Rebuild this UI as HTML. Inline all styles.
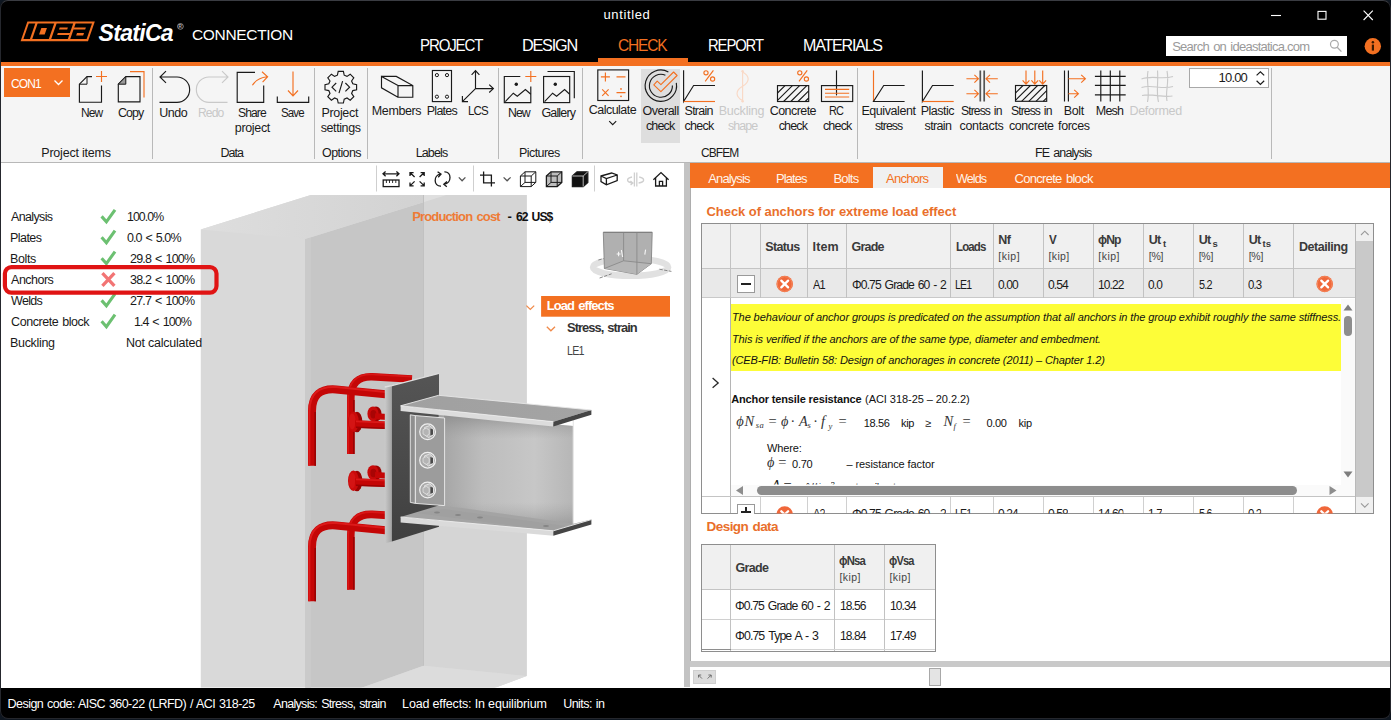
<!DOCTYPE html>
<html>
<head>
<meta charset="utf-8">
<title>untitled</title>
<style>
*{box-sizing:border-box;margin:0;padding:0}
html,body{width:1391px;height:720px;overflow:hidden;background:#000}
body{font-family:"Liberation Sans",sans-serif;font-size:12px;color:#1a1a1a;position:relative}
.abs{position:absolute}
.t{position:absolute;white-space:pre;line-height:1;color:#1a1a1a}
svg{position:absolute;overflow:visible}
#titlebar{left:0;top:0;width:1391px;height:62px;background:#000}
#oline{left:0;top:62px;width:1391px;height:4px;background:#f37021}
#ribbon{left:0;top:66px;width:1391px;height:96px;background:#f5f5f5}
#ribline{left:0;top:162px;width:1391px;height:1px;background:#b8b8b8}
#main{left:0;top:163px;width:1391px;height:525px;background:#fff}
#status{left:0;top:688px;width:1391px;height:32px;background:#000}
.sep{position:absolute;top:68px;width:1px;height:91px;background:#b9b9b9}
</style>
</head>
<body>
<div id="titlebar" class="abs"></div>
<div id="oline" class="abs"></div>
<div id="ribbon" class="abs"></div>
<div id="ribline" class="abs"></div>
<div id="main" class="abs"></div>
<div id="status" class="abs"></div>

<!--TITLE-->
<div class="abs" style="left:598px;top:58px;width:90px;height:4px;background:#f37021"></div>
<div class="abs" style="left:1166px;top:36px;width:181px;height:20px;background:#fff"></div>
<svg style="left:0;top:0" width="1391" height="62" viewBox="0 0 1391 62" fill="none">
<!-- IDEA logo -->
<g transform="translate(20.6 41.2) skewX(-19)">
<rect x="0" y="-19.8" width="67.4" height="19.8" fill="#f37021"/>
<rect x="2.1" y="-17.7" width="6.5" height="15.6" fill="#000"/>
<rect x="10.9" y="-17.7" width="16.6" height="15.6" fill="#000"/>
<rect x="29.9" y="-17.7" width="16.6" height="15.6" fill="#000"/>
<rect x="48.9" y="-17.7" width="16.4" height="15.6" fill="#000"/>
<rect x="16.2" y="-13.2" width="5.6" height="6.6" fill="#f37021"/>
<rect x="34.4" y="-13.6" width="8.2" height="2" fill="#f37021"/><rect x="34.4" y="-8.2" width="12.4" height="2" fill="#f37021"/>
<rect x="48.6" y="-13.6" width="12" height="2" fill="#f37021"/><rect x="53.6" y="-8.2" width="7" height="2.6" fill="#f37021"/>
</g>
<!-- registered mark -->
<circle cx="180.4" cy="26.4" r="2.9" stroke="#bbb" stroke-width="0.7"/>
<!-- window controls -->
<path d="M1271 15.5 H1281" stroke="#fff" stroke-width="1.1"/>
<rect x="1318" y="11.4" width="8" height="7.8" stroke="#fff" stroke-width="1.1"/>
<path d="M1363.6 10.7 L1372.8 20 M1372.8 10.7 L1363.6 20" stroke="#fff" stroke-width="1.1"/>
<!-- search magnifier -->
<circle cx="1334.4" cy="44.2" r="3.9" stroke="#a9a9a9" stroke-width="1.2"/><path d="M1337.2 47.2 L1341.4 51.6" stroke="#a9a9a9" stroke-width="1.3"/>
<!-- info -->
<circle cx="1372.8" cy="46.3" r="8.2" fill="#f37021"/>
<rect x="1371.8" y="44.6" width="2.2" height="6" fill="#3a1a00"/><circle cx="1372.9" cy="42.2" r="1.25" fill="#3a1a00"/>
</svg>
<!--TITLE-END-->

<!--RIBBON-->
<div class="abs" style="left:4px;top:68px;width:66px;height:29px;background:#f37021"></div>
<div class="abs" style="left:641px;top:69px;width:39px;height:74px;background:#dedede"></div>
<div class="sep" style="left:152px"></div><div class="sep" style="left:314px"></div><div class="sep" style="left:367px"></div>
<div class="sep" style="left:498px"></div><div class="sep" style="left:582px"></div><div class="sep" style="left:857px"></div><div class="sep" style="left:1271px"></div>
<div class="abs" style="left:1189px;top:68px;width:80px;height:20px;background:#fff;border:1px solid #a8a8a8"></div>
<svg style="left:0;top:0" width="1391" height="170" viewBox="0 0 1391 170" fill="none" stroke="#1a1a1a" stroke-width="1.15" stroke-linecap="butt" stroke-linejoin="miter">
<!-- CON1 chevron -->
<path d="M54.5 80.5 L58.5 84.5 L62.5 80.5" stroke="#fff" stroke-width="1.3"/>
<!-- New -->
<path d="M92 76.6 H87 L79.4 84.2 V102.2 H101.5 V85.5"/><path d="M79.4 84.2 H87 V76.6" stroke-width="1"/>
<path d="M101.5 71 V82 M96 76.5 H107" stroke="#f37021"/>
<!-- Copy -->
<path d="M125.8 76.6 H140 V101.8 H118.3 V84.2 Z"/><path d="M118.3 84.2 H125.8 V76.6 Z" fill="#9a9a9a" stroke-width="1"/>
<path d="M130 71.6 H144 V97.6" stroke="#f37021"/>
<!-- Undo -->
<path d="M166 71.2 L160 77 L166 82.8 M160 77 H177 A12.65 12.65 0 0 1 177 102.3 H159.5"/>
<!-- Redo -->
<path d="M222 71.2 L228 77 L222 82.8 M228 77 H209 A12.65 12.65 0 0 0 209 102.3 H227.5" stroke="#c9c9c9"/>
<!-- Share -->
<path d="M255 72.4 H237.2 V102.3 H263.7 V85.6"/>
<path d="M252.4 85.2 Q257 78 267 76.8 M262 71.8 L267.6 76.7 L262.6 82.2" stroke="#f37021"/>
<!-- Save -->
<path d="M277.3 96.4 V102.3 H308.7 V96.4"/>
<path d="M293 71.5 V96 M288 90.5 L293 96 L298 90.5" stroke="#f37021"/>
<!-- Project settings gear -->
<g transform="translate(340.8 87.2)">
<path id="gear" d="M-2.6 -15.8 H2.6 L3.4 -12 L6.2 -10.8 L9.4 -13 L13 -9.4 L10.8 -6.2 L12 -3.4 L15.8 -2.6 V2.6 L12 3.4 L10.8 6.2 L13 9.4 L9.4 13 L6.2 10.8 L3.4 12 L2.6 15.8 H-2.6 L-3.4 12 L-6.2 10.8 L-9.4 13 L-13 9.4 L-10.8 6.2 L-12 3.4 L-15.8 2.6 V-2.6 L-12 -3.4 L-10.8 -6.2 L-13 -9.4 L-9.4 -13 L-6.2 -10.8 L-3.4 -12 Z"/>
<path d="M-4.6 -4.2 L-8.8 0 L-4.6 4.2 M4.6 -4.2 L8.8 0 L4.6 4.2 M1.8 -6 L-1.8 6"/>
</g>
<!-- Members -->
<path d="M381.5 76.4 H396.3 L412.8 85.6 V97.2 H398 V85.6 H412.8 M398 85.6 L381.5 76.4 V87.8 L398 97.2"/>
<!-- Plates -->
<rect x="432.4" y="70.5" width="19.1" height="31.1"/>
<circle cx="436.9" cy="75.1" r="1.6" stroke-width="1"/><circle cx="447" cy="75.1" r="1.6" stroke-width="1"/><circle cx="436.9" cy="96.7" r="1.6" stroke-width="1"/><circle cx="447" cy="96.7" r="1.6" stroke-width="1"/>
<!-- LCS -->
<path d="M475.5 70.6 V88.6 H493.4 M475.5 88.6 L462.6 101.4 M471.6 74.8 L475.5 70.6 L479.4 74.8 M489.2 84.7 L493.4 88.6 L489.2 92.5 M462.4 96 V101.6 H468"/>
<!-- New picture -->
<path d="M520.3 76.5 H504.3 V102.6 H530.8 V86.5"/>
<path d="M505.3 101.6 L513.3 93.2 L517.3 96.2 L525.4 89.6 L530.8 94.2"/>
<circle cx="516.3" cy="84.2" r="1.7" fill="#1a1a1a" stroke="none"/>
<path d="M530.8 71 V82 M525.3 76.5 H536.3" stroke="#f37021"/>
<!-- Gallery -->
<rect x="543.6" y="76.5" width="26.1" height="26.1"/>
<path d="M544.6 101.6 L552.6 93.2 L556.6 96.2 L564.6 89.6 L569.7 94.2"/>
<circle cx="555.3" cy="84.2" r="1.7" fill="#1a1a1a" stroke="none"/>
<path d="M547.5 71.5 H574.3 V98.2"/>
<!-- Calculate -->
<rect x="597.8" y="69.9" width="30.8" height="30.6"/>
<path d="M605.4 72.4 V81.4 M600.9 76.9 H609.9 M616.5 76.9 H625.5 M602.2 89.4 L608.6 95.8 M608.6 89.4 L602.2 95.8 M616.5 92.6 H625.5" stroke="#f37021"/>
<circle cx="621" cy="88.9" r="0.9" fill="#f37021" stroke="none"/><circle cx="621" cy="96.3" r="0.9" fill="#f37021" stroke="none"/>
<path d="M609.2 121.2 L612.7 124.6 L616.2 121.2"/>
<!-- Overall check -->
<path d="M668.4 71.9 A15.7 15.7 0 1 0 676.3 82.8"/><path d="M665.4 75.2 A11.5 11.5 0 1 0 672.4 85.4"/>
<path d="M653.8 84.9 L660.9 91.6 L677.1 75.5 L673.6 72 L660.9 84.6 L657.2 81.2 Z" stroke="#f37021" stroke-width="1.1" stroke-linejoin="round"/>
<!-- Strain check -->
<path d="M683.6 70.3 V101.5 L693.6 85.5 H715"/><path d="M683.6 101.5 H715" stroke="#f37021"/>
<g stroke="#f37021"><circle cx="706" cy="72.8" r="2.1"/><circle cx="712.6" cy="79" r="2.1"/><path d="M713.4 70.4 L705.2 81.4"/></g>
<!-- Buckling (disabled) -->
<path d="M742.6 71 V101.4 M742.6 72 C750 76 750 82 742.6 86.2 C735.2 90.4 735.2 96.4 742.6 100.6" stroke="#f9d9c6"/>
<circle cx="742.6" cy="71.3" r="1.2" fill="#f9d9c6" stroke="none"/><circle cx="742.6" cy="101.2" r="1.2" fill="#f9d9c6" stroke="none"/>
<!-- Concrete check -->
<rect x="777.5" y="85.6" width="31.2" height="15.9"/>
<path d="M777.5 93 L785 85.6 M777.5 100.4 L792.4 85.6 M783.6 101.5 L799.6 85.6 M790.8 101.5 L806.8 85.6 M798 101.5 L808.7 90.8 M805.2 101.5 L808.7 98" stroke-width="1.1"/>
<g stroke="#f37021"><circle cx="799.8" cy="72.8" r="2.1"/><circle cx="806.4" cy="79" r="2.1"/><path d="M807.2 70.4 L799 81.4"/></g>
<!-- RC check -->
<rect x="821.5" y="85.6" width="31.2" height="15.9"/><path d="M836.5 70.4 V95.4"/>
<path d="M825 89.4 H849.2 M825 93.2 H849.2 M825 97 H849.2" stroke="#f37021"/>
<!-- Equivalent stress -->
<path d="M873.5 70.4 V101.5" stroke="#f37021"/><path d="M904.6 101.5 H873.5 L883.7 85.5 H904.6"/>
<!-- Plastic strain -->
<path d="M922.4 70.4 V101.5 L932.5 85.5 H953.7"/><path d="M922.4 101.5 H953.7" stroke="#f37021"/>
<!-- Stress in contacts -->
<path d="M980.3 70.4 V101.5 M984.2 70.4 V101.5" stroke="#555" stroke-width="1.7"/>
<path d="M966.4 78.7 H978.2 M974.4 74.8 L978.4 78.7 L974.4 82.6 M997.8 78.7 H986.2 M990 74.8 L986 78.7 L990 82.6 M966.4 93.7 H978.2 M974.4 89.8 L978.4 93.7 L974.4 97.6 M997.8 93.7 H986.2 M990 89.8 L986 93.7 L990 97.6" stroke="#f37021"/>
<!-- Stress in concrete -->
<rect x="1015.5" y="85.5" width="31.2" height="15.8"/>
<path d="M1015.5 93 L1023 85.5 M1015.5 100.3 L1030.4 85.5 M1021.6 101.3 L1037.6 85.5 M1028.8 101.3 L1044.8 85.5 M1036 101.3 L1046.7 90.7 M1043.2 101.3 L1046.7 97.8" stroke-width="1.1"/>
<path d="M1026 70.4 V84 M1022.6 80.4 L1026 84.2 L1029.4 80.4 M1034.8 70.4 V84 M1031.4 80.4 L1034.8 84.2 L1038.2 80.4 M1042.7 70.4 V84 M1039.3 80.4 L1042.7 84.2 L1046.1 80.4" stroke="#f37021"/>
<!-- Bolt forces -->
<path d="M1064.5 70.4 V101.5 M1068.4 70.4 V101.5"/>
<path d="M1068.4 78.7 H1085.2 M1081.2 74.8 L1085.4 78.7 L1081.2 82.6 M1068.4 93.7 H1078.2 M1074.2 89.8 L1078.4 93.7 L1074.2 97.6" stroke="#f37021"/>
<!-- Mesh -->
<path d="M1100.8 70.4 V101.5 M1110.3 70.4 V101.5 M1119.8 70.4 V101.5 M1094.9 76.3 H1125.7 M1094.9 85.4 H1125.7 M1094.9 94.8 H1125.7"/>
<!-- Deformed -->
<path d="M1148 71 C1146 82 1150 90 1147.5 102 M1157.5 70.5 C1158.5 82 1156 92 1158.5 102 M1167 71 C1169.5 82 1165 92 1167 101 M1141.5 79 C1152 75 1162 80 1173 76.5 M1141.5 87.5 C1152 84 1162 90 1173 86.5 M1142 95.5 C1152 93 1162 98 1172.5 96" stroke="#c9c9c9"/>
<!-- Spinner arrows -->
<path d="M1256.6 75.4 L1260.4 71.8 L1264.2 75.4 M1256.6 80.8 L1260.4 84.4 L1264.2 80.8" stroke-width="1.2"/>
</svg>
<!--RIBBON-END-->

<!--LEFT-->
<div class="abs" style="left:0;top:163px;width:1px;height:525px;background:#222"></div>
<svg style="left:0;top:0" width="1391" height="720" viewBox="0 0 1391 720" fill="none">
<defs>
<clipPath id="vp"><rect x="1" y="195" width="683" height="492.5"/></clipPath>
<linearGradient id="web" x1="0" y1="0" x2="1" y2="0"><stop offset="0" stop-color="#a6a6a6"/><stop offset="0.3" stop-color="#bdbdbd"/><stop offset="0.7" stop-color="#c7c7c7"/><stop offset="1" stop-color="#b6b6b6"/></linearGradient>
<linearGradient id="webv" x1="0" y1="0" x2="0" y2="1"><stop offset="0" stop-color="#858585" stop-opacity="0.75"/><stop offset="0.22" stop-color="#999" stop-opacity="0"/><stop offset="0.78" stop-color="#999" stop-opacity="0"/><stop offset="1" stop-color="#858585" stop-opacity="0.6"/></linearGradient>
<linearGradient id="tfl" x1="0" y1="0" x2="1" y2="0"><stop offset="0" stop-color="#a0a0a0"/><stop offset="1" stop-color="#a4a4a4"/></linearGradient>
<linearGradient id="redv" x1="0" y1="0" x2="1" y2="0"><stop offset="0" stop-color="#e51a1a"/><stop offset="0.45" stop-color="#d40808"/><stop offset="1" stop-color="#8e0000"/></linearGradient>
</defs>
<g clip-path="url(#vp)">
<!-- concrete block -->
<linearGradient id="topf" gradientUnits="userSpaceOnUse" x1="200" y1="0" x2="446" y2="0"><stop offset="0" stop-color="#dedede"/><stop offset="0.45" stop-color="#d8d8d8"/><stop offset="1" stop-color="#d1d1d1"/></linearGradient>
<polygon points="200.8,229.5 310.8,195 526.7,195 526.7,676 494.5,688 200.8,688" fill="#d9d9d9"/>
<polygon points="305.2,239.1 446.7,195 423.5,195 423.5,665.8 361,688 305.2,688" fill="#c6c6c6"/>
<polygon points="305.2,239.1 311,237.3 311,688 305.2,688" fill="#cacaca"/>
<polygon points="423.5,195 526.7,195 526.7,676 423.5,665.8" fill="#d5d5d5"/>
<polygon points="200.8,229.5 310.8,195 446.7,195 305.2,239.1" fill="url(#topf)"/>
<polygon points="423.5,195 446.7,195 423.5,202.2" fill="#dfdfdf"/>
<polygon points="423.5,665.8 526.7,676 494.5,688 361,688" fill="#dcdcdc"/>
<path d="M423.5 195 V665.8" stroke="#bebebe" stroke-width="0.9"/>
<!-- anchors: back (inner) hooks -->
<g fill="none" stroke-linecap="butt">
<path d="M412 379 L372 376.8 Q350.8 376.2 350.8 398 V454" stroke="#c40606" stroke-width="7.6"/>
<path d="M412 376.6 L372 374.4 Q348.4 374 348.2 398 V454" stroke="#d81616" stroke-width="1.8"/>
<path d="M353.8 400 V454" stroke="#9a0202" stroke-width="1.6"/>
<path d="M388 515.4 L372 514.4 Q350.8 513.8 350.8 535 V589.8" stroke="#c40606" stroke-width="7.6"/>
<path d="M388 513 L372 512 Q348.4 511.6 348.2 535 V589.8" stroke="#d81616" stroke-width="1.8"/>
<path d="M353.8 537 V589.8" stroke="#9a0202" stroke-width="1.6"/>
</g>
<!-- back studs -->
<ellipse cx="376" cy="414" rx="5.6" ry="7.4" fill="#9c0202"/><ellipse cx="373" cy="413.8" rx="5.6" ry="7.4" fill="#c80a0a"/><ellipse cx="373.4" cy="414.2" rx="3" ry="4.2" fill="#a80404"/>
<path d="M375 416.2 L388 417" stroke="#c40606" stroke-width="6"/>
<ellipse cx="376" cy="472.8" rx="5.6" ry="7.4" fill="#9c0202"/><ellipse cx="373" cy="472.6" rx="5.6" ry="7.4" fill="#c80a0a"/><ellipse cx="373.4" cy="473" rx="3" ry="4.2" fill="#a80404"/>
<path d="M375 475 L388 475.8" stroke="#c40606" stroke-width="6"/>
<!-- front (outer) hooks -->
<g fill="none">
<path d="M388 394.6 L336 389.4 Q312 387.6 312 411 V465.8" stroke="#c40606" stroke-width="8"/>
<path d="M388 392.2 L336 387 Q309.6 385.4 309.4 411 V465.8" stroke="#dc1a1a" stroke-width="2"/>
<path d="M315.2 412 V465.8" stroke="#9a0202" stroke-width="1.6"/>
<path d="M388 530.6 L336 525.4 Q312 523.6 312 547 V601.2" stroke="#c40606" stroke-width="8"/>
<path d="M388 528.2 L336 523 Q309.6 521.4 309.4 547 V601.2" stroke="#dc1a1a" stroke-width="2"/>
<path d="M315.2 548 V601.2" stroke="#9a0202" stroke-width="1.6"/>
</g>
<!-- front studs -->
<ellipse cx="357" cy="422" rx="5.4" ry="10.3" fill="#9c0202"/><ellipse cx="353.4" cy="421.8" rx="5.4" ry="10.3" fill="#ca0a0a"/><ellipse cx="352.2" cy="421.4" rx="3.4" ry="8" fill="#d41414"/>
<path d="M355 424 L388 425.2" stroke="#c40606" stroke-width="7.4"/><path d="M356 421.4 L388 422.6" stroke="#da1818" stroke-width="1.6"/><path d="M356 427.2 L388 428.4" stroke="#9a0202" stroke-width="1.4"/>
<ellipse cx="357" cy="481" rx="5.4" ry="10.3" fill="#9c0202"/><ellipse cx="353.4" cy="480.8" rx="5.4" ry="10.3" fill="#ca0a0a"/><ellipse cx="352.2" cy="480.4" rx="3.4" ry="8" fill="#d41414"/>
<path d="M355 482 L388 483.2" stroke="#c40606" stroke-width="7.4"/><path d="M356 479.4 L388 480.6" stroke="#da1818" stroke-width="1.6"/><path d="M356 485.2 L388 486.4" stroke="#9a0202" stroke-width="1.4"/>
<!-- base plate -->
<linearGradient id="bps" x1="0" y1="0" x2="1" y2="0"><stop offset="0" stop-color="#c9c9c9"/><stop offset="1" stop-color="#a3a3a3"/></linearGradient>
<linearGradient id="bpd" x1="0" y1="0" x2="0" y2="1"><stop offset="0" stop-color="#555"/><stop offset="1" stop-color="#404040"/></linearGradient>
<polygon points="384.8,387 391.9,385.6 391.9,541.6 384.8,543.6" fill="url(#bps)"/>
<polygon points="391.9,385.6 439,373.4 439,526.8 391.9,541.6" fill="url(#bpd)"/>
<path d="M384.8 387 L391.9 385.6 L439 373.4" stroke="#dedede" stroke-width="1.3"/>
<!-- web -->
<polygon points="444,414 573.3,426 573.3,527 444,509" fill="url(#web)"/>
<polygon points="444,414 573.3,426 573.3,527 444,509" fill="url(#webv)"/>
<polygon points="438.6,410 444,414 444,509 438.6,512" fill="#a4a4a4"/>
<path d="M573.3 420 V527" stroke="#e8e8e8" stroke-width="1.2"/>
<!-- bottom flange -->
<polygon points="400.6,517 438.6,505.6 462,508 573.3,523.8 591.4,519.6 553.3,530.8" fill="#a4a4a4"/>
<polygon points="444,509 573.3,527 553.3,530.8 416,513" fill="#a0a0a0"/>
<polygon points="400.6,517 553.3,530.8 553.3,535.8 400.6,522.4" fill="#dadada"/>
<polygon points="553.3,530.8 591.4,519.6 591.4,524.6 553.3,535.8" fill="#454545"/>
<path d="M400.6 517 L553.3 530.8 L591.4 519.6" stroke="#ececec" stroke-width="0.9"/>
<g fill="#858585"><ellipse cx="437" cy="512.4" rx="3" ry="1"/><ellipse cx="458" cy="515" rx="3" ry="1"/><ellipse cx="480" cy="517.6" rx="3" ry="1"/><ellipse cx="546" cy="526" rx="3" ry="1"/></g>
<!-- fin plate -->
<polygon points="410.3,414.8 415.4,415.6 415.4,503.4 410.3,502.4" fill="#8f8f8f" stroke="#ececec" stroke-width="0.9"/>
<polygon points="415.4,415.6 444.6,418 444.6,505.6 415.4,503.4" fill="#9c9c9c" stroke="#ececec" stroke-width="0.9"/>
<!-- bolts -->
<g id="bolt"><circle cx="427.6" cy="431.8" r="7.9" fill="#a9a9a9" stroke="#efefef" stroke-width="1.2"/><path d="M424.6 427.4 L429.6 425.6 L433.6 429 L433.4 435 L428.6 437.6 L424.4 434.6 Z" fill="#bdbdbd" stroke="#ededed" stroke-width="0.8"/><path d="M430.4 428.6 L433 429.6 V434.6 L430.4 435.6 Z" fill="#4a4a4a"/><path d="M423 429.6 L426.4 428.2 L429.2 430.2 V434.2 L426.4 436 L423 434 Z" fill="#b4b4b4" stroke="#e6e6e6" stroke-width="0.7"/></g>
<g transform="translate(0 28.4)"><circle cx="427.6" cy="431.8" r="7.9" fill="#a9a9a9" stroke="#efefef" stroke-width="1.2"/><path d="M424.6 427.4 L429.6 425.6 L433.6 429 L433.4 435 L428.6 437.6 L424.4 434.6 Z" fill="#bdbdbd" stroke="#ededed" stroke-width="0.8"/><path d="M430.4 428.6 L433 429.6 V434.6 L430.4 435.6 Z" fill="#4a4a4a"/><path d="M423 429.6 L426.4 428.2 L429.2 430.2 V434.2 L426.4 436 L423 434 Z" fill="#b4b4b4" stroke="#e6e6e6" stroke-width="0.7"/></g>
<g transform="translate(0 58.2)"><circle cx="427.6" cy="431.8" r="7.9" fill="#a9a9a9" stroke="#efefef" stroke-width="1.2"/><path d="M424.6 427.4 L429.6 425.6 L433.6 429 L433.4 435 L428.6 437.6 L424.4 434.6 Z" fill="#bdbdbd" stroke="#ededed" stroke-width="0.8"/><path d="M430.4 428.6 L433 429.6 V434.6 L430.4 435.6 Z" fill="#4a4a4a"/><path d="M423 429.6 L426.4 428.2 L429.2 430.2 V434.2 L426.4 436 L423 434 Z" fill="#b4b4b4" stroke="#e6e6e6" stroke-width="0.7"/></g>
<!-- top flange -->
<polygon points="400.6,405.8 438.6,395.3 591.4,410 553.3,421.7" fill="url(#tfl)"/>
<polygon points="400.6,405.8 553.3,421.7 553.3,426.6 400.6,411" fill="#dcdcdc"/>
<polygon points="553.3,421.7 591.4,410 591.4,414.8 553.3,426.6" fill="#454545"/>
<path d="M400.6 405.8 L438.6 395.3 L591.4 410" stroke="#e6e6e6" stroke-width="0.9"/>
<path d="M400.6 405.8 L553.3 421.7" stroke="#f0f0f0" stroke-width="0.8"/>
</g>
<!-- view cube -->
<ellipse cx="630.6" cy="267.2" rx="37.6" ry="8.6" stroke="#e1e1e1" stroke-width="6.4"/>
<polygon points="603.3,232.4 652.2,232.4 651.3,263.7 636.9,274.3 604.4,268.5" fill="#b0b0b0" stroke="#858585" stroke-width="0.9"/>
<polygon points="623.6,260.8 651.3,263.7 636.9,274.3 604.4,268.5" fill="#b6b6b6"/>
<path d="M623.6 232.4 V260.8 L604.4 268.5 M623.6 260.8 L651.3 263.7 M636.9 232.4 V274.3" stroke="#8a8a8a" stroke-width="0.9"/>
<path d="M603.3 232.4 H652.2" stroke="#808080" stroke-width="1.3"/>
<path d="M616.6 254 H620.6 M618.6 251.8 V256.2 M621.4 250 L622.6 257 M645.6 249.6 L644.8 254.6" stroke="#f6f6f6" stroke-width="1.1"/>
<path d="M598.4 260 L603.6 258.6 M599.6 278 L611.6 273.8 M659.4 269.2 L671.4 271.4" stroke="#7a7a7a" stroke-width="0.9" stroke-dasharray="3.4 1.4"/>
<!-- load effects tree -->
<rect x="541.1" y="296" width="128.9" height="20.7" fill="#f37021"/>
<path d="M526.4 305.6 L530.3 309.4 L534.2 305.6 M546.8 326.8 L550.9 330.8 L555 326.8" stroke="#f08a4a" stroke-width="1.3"/>
<!-- toolbar -->
<g stroke="#1a1a1a" stroke-width="1.3">
<path d="M376.5 165.5 V191.5 M473.5 165.5 V191.5 M594.5 165.5 V191.5" stroke="#cfcfcf" stroke-width="1"/>
<!-- ruler -->
<path d="M383 173.8 H399 M385.6 171.4 L383 173.8 L385.6 176.2 M396.4 171.4 L399 173.8 L396.4 176.2"/>
<rect x="383.2" y="180" width="15.8" height="6.6"/><path d="M386.4 180 V183 M389.5 180 V183 M392.6 180 V183 M395.8 180 V183" stroke-width="0.9"/>
<!-- expand -->
<path d="M410 176 V172.6 H413.6 M410.2 172.8 L414.6 177 M424.2 176 V172.6 H420.6 M424 172.8 L419.6 177 M410 182.4 V185.8 H413.6 M410.2 185.6 L414.6 181.4 M424.2 182.4 V185.8 H420.6 M424 185.6 L419.6 181.4"/>
<!-- rotate -->
<path d="M441 186.2 C433.4 186.6 433.2 175 440.6 174.2 M437.6 171.8 L441 174.2 L438.2 177.2 M444.4 171.8 C451.8 171.4 452 183.2 444.2 184.2 M447 181.6 L443.8 184.3 L446.8 186.8"/>
<path d="M458.8 177.4 L462.1 180.8 L465.4 177.4" stroke="#555"/>
<!-- crop -->
<path d="M483.6 171.6 V182.8 H495 M480 175.2 H491.4 V186.6"/>
<path d="M503.6 177.4 L507.1 180.8 L510.6 177.4" stroke="#555"/>
<!-- wire cube -->
<path d="M520.4 176 L525 171.8 H535.8 V182.4 L531.2 186.6 H520.4 Z M520.4 176 H531.2 V186.6 M531.2 176 L535.8 171.8 M525 171.8 V182.4 H535.8 M525 182.4 L520.4 186.6" stroke-width="1"/>
<!-- gray cube -->
<path d="M546.4 176 L551 171.8 H561.8 V182.4 L557.2 186.6 H546.4 Z" fill="#bdbdbd"/><path d="M546.4 176 H557.2 V186.6 M557.2 176 L561.8 171.8 M551 171.8 V182.4 H561.8 M551 182.4 L546.4 186.6" stroke-width="1"/>
<!-- black cube -->
<path d="M572.4 176 L577 171.8 H587.8 V182.4 L583.2 186.6 H572.4 Z" fill="#111"/><path d="M572.4 176 H583.2 V186.6 M583.2 176 L587.8 171.8" stroke="#fff" stroke-width="0.7"/>
<!-- member -->
<path d="M601 176 L611.6 173 L617.2 175 V180.6 L606.4 184.8 L601 181.6 Z M601 176 L606.4 178.6 L617.2 175 M606.4 178.6 V184.8"/>
<!-- disabled rotate -->
<path d="M634.4 172.4 V186.4 M636.8 172.4 V186.4 M632 177 C626 178.4 626 182 632.6 183 M630.4 181 L632.8 183 L630.6 185 M639.2 177 C645.2 178.4 645.2 182 638.6 183" stroke="#cfcfcf"/>
<!-- home -->
<path d="M653.4 179.8 L661 172.6 L668.6 179.8 M655.6 178 V186 H666.4 V178 M659.4 186 V181.4 H662.6 V186"/>
</g>
<!-- check marks -->
<g stroke="#6cc071" stroke-width="3.1" stroke-linejoin="miter" fill="none">
<path d="M101.6 216.4 L106.4 221.8 L115 209.8"/>
<path d="M101.6 237.3 L106.4 242.7 L115 230.7"/>
<path d="M101.6 258.2 L106.4 263.6 L115 251.6"/>
<path d="M101.6 300.4 L106.4 305.8 L115 293.8"/>
<path d="M101.6 321.3 L106.4 326.7 L115 314.7"/>
</g>
<path d="M102.4 273.2 L114.4 285.8 M114.4 273.2 L102.4 285.8" stroke="#f27474" stroke-width="3.3"/>
<rect x="4.9" y="267.1" width="211.6" height="25.5" rx="6.5" ry="6.5" stroke="#e01414" stroke-width="4.2"/>
</svg>
<!--LEFT-END-->

<!--RIGHT-->
<div class="abs" style="left:684px;top:163px;width:6px;height:524px;background:#c3c3c3"></div>
<div class="abs" style="left:690px;top:163px;width:701px;height:25px;background:#f37021"></div>
<div class="abs" style="left:873px;top:167px;width:70px;height:21px;background:#f0f0f0"></div>
<div class="abs" style="left:690px;top:188px;width:1px;height:473px;background:#adadad"></div>
<!-- main table -->
<div class="abs" style="left:701px;top:223px;width:673px;height:291px;background:#fff;border:1px solid #8e8e8e"></div>
<div class="abs" style="left:702px;top:224px;width:654px;height:44px;background:#f0f0f0"></div>
<div class="abs" style="left:702px;top:268px;width:654px;height:30px;background:#e9e9e9;border-top:1px solid #c4c4c4;border-bottom:1px solid #c9c9c9"></div>
<!-- vertical scrollbar of table -->
<div class="abs" style="left:1355px;top:224px;width:18px;height:289px;background:#c9c9c9"></div>
<div class="abs" style="left:1356px;top:224px;width:17px;height:17px;background:#f0f0f0"></div>
<div class="abs" style="left:1356px;top:497px;width:17px;height:16px;background:#f0f0f0"></div>
<!-- column lines header+row -->
<div class="abs" style="left:730px;top:224px;width:1px;height:74px;background:#c2c2c2"></div>
<div class="abs" style="left:760px;top:224px;width:1px;height:74px;background:#c2c2c2"></div>
<div class="abs" style="left:807px;top:224px;width:1px;height:74px;background:#c2c2c2"></div>
<div class="abs" style="left:846px;top:224px;width:1px;height:74px;background:#c2c2c2"></div>
<div class="abs" style="left:950px;top:224px;width:1px;height:74px;background:#c2c2c2"></div>
<div class="abs" style="left:993px;top:224px;width:1px;height:74px;background:#c2c2c2"></div>
<div class="abs" style="left:1043px;top:224px;width:1px;height:74px;background:#c2c2c2"></div>
<div class="abs" style="left:1093px;top:224px;width:1px;height:74px;background:#c2c2c2"></div>
<div class="abs" style="left:1143px;top:224px;width:1px;height:74px;background:#c2c2c2"></div>
<div class="abs" style="left:1193px;top:224px;width:1px;height:74px;background:#c2c2c2"></div>
<div class="abs" style="left:1243px;top:224px;width:1px;height:74px;background:#c2c2c2"></div>
<div class="abs" style="left:1293px;top:224px;width:1px;height:74px;background:#c2c2c2"></div>
<div class="abs" style="left:1355px;top:224px;width:1px;height:289px;background:#b9b9b9"></div>
<!-- detail area -->
<div class="abs" style="left:730px;top:298px;width:1px;height:215px;background:#b5b5b5"></div>
<div class="abs" style="left:731px;top:304px;width:610px;height:67px;background:#fdfd38"></div>
<div class="abs" style="left:731px;top:485px;width:624px;height:11px;background:#fafafa"></div>
<div class="abs" style="left:757px;top:486px;width:540px;height:9px;background:#8d8d8d;border-radius:5px"></div>
<div class="abs" style="left:1341px;top:299px;width:14px;height:186px;background:#fafafa"></div>
<div class="abs" style="left:1344px;top:316px;width:8px;height:20px;background:#8d8d8d;border-radius:4px"></div>
<!-- row A2 -->
<div class="abs" style="left:702px;top:496px;width:653px;height:1px;background:#c4c4c4"></div>
<div class="abs" style="left:760px;top:497px;width:1px;height:16px;background:#d0d0d0"></div><div class="abs" style="left:807px;top:497px;width:1px;height:16px;background:#d0d0d0"></div>
<div class="abs" style="left:846px;top:497px;width:1px;height:16px;background:#d0d0d0"></div><div class="abs" style="left:950px;top:497px;width:1px;height:16px;background:#d0d0d0"></div>
<div class="abs" style="left:993px;top:497px;width:1px;height:16px;background:#d0d0d0"></div><div class="abs" style="left:1043px;top:497px;width:1px;height:16px;background:#d0d0d0"></div>
<div class="abs" style="left:1093px;top:497px;width:1px;height:16px;background:#d0d0d0"></div><div class="abs" style="left:1143px;top:497px;width:1px;height:16px;background:#d0d0d0"></div>
<div class="abs" style="left:1193px;top:497px;width:1px;height:16px;background:#d0d0d0"></div><div class="abs" style="left:1243px;top:497px;width:1px;height:16px;background:#d0d0d0"></div>
<div class="abs" style="left:1293px;top:497px;width:1px;height:16px;background:#d0d0d0"></div>
<!-- +/- buttons -->
<div class="abs" style="left:737px;top:275px;width:18px;height:18px;background:#fff;border:1px solid #9a9a9a"></div>
<div class="abs" style="left:741px;top:283px;width:10px;height:2px;background:#222"></div>
<div class="abs" style="left:737px;top:504px;width:18px;height:10px;background:#fff;border:1px solid #9a9a9a;border-bottom:none"></div>
<div class="abs" style="left:745px;top:507px;width:2px;height:6px;background:#222"></div><div class="abs" style="left:741px;top:511px;width:10px;height:2px;background:#222"></div>
<!-- design data table -->
<div class="abs" style="left:701px;top:544px;width:235px;height:108px;background:#fff;border:1px solid #8e8e8e"></div>
<div class="abs" style="left:702px;top:545px;width:233px;height:45px;background:#f0f0f0;border-bottom:1px solid #c4c4c4"></div>
<div class="abs" style="left:702px;top:619px;width:233px;height:1px;background:#d0d0d0"></div>
<div class="abs" style="left:730px;top:545px;width:1px;height:106px;background:#c2c2c2"></div>
<div class="abs" style="left:834px;top:545px;width:1px;height:106px;background:#c2c2c2"></div>
<div class="abs" style="left:884px;top:545px;width:1px;height:106px;background:#c2c2c2"></div>
<div class="abs" style="left:702px;top:649px;width:233px;height:1px;background:#d4d4d4"></div><div class="abs" style="left:702px;top:649px;width:29px;height:1px;background:#8e8e8e"></div>
<!-- bottom band -->
<div class="abs" style="left:690px;top:661px;width:701px;height:6px;background:#c9c9c9"></div>
<div class="abs" style="left:693px;top:670px;width:23px;height:14px;background:#dcdcdc;border:1px solid #cfcfcf"></div>
<div class="abs" style="left:929px;top:668px;width:12px;height:18px;background:#e4e4e4;border:1px solid #a8a8a8"></div>
<svg style="left:0;top:0" width="1391" height="720" viewBox="0 0 1391 720" fill="none">
<!-- status icons -->
<g id="xi"><circle cx="784.7" cy="284" r="8.3" fill="#f0673a"/><circle cx="784.7" cy="284" r="7.4" fill="none" stroke="#f58a5e" stroke-width="1"/><path d="M781.3 280.6 L788.1 287.4 M788.1 280.6 L781.3 287.4" stroke="#fff" stroke-width="2.3" stroke-linecap="round"/></g>
<g transform="translate(540 0)"><circle cx="784.7" cy="284" r="8.3" fill="#f0673a"/><circle cx="784.7" cy="284" r="7.4" fill="none" stroke="#f58a5e" stroke-width="1"/><path d="M781.3 280.6 L788.1 287.4 M788.1 280.6 L781.3 287.4" stroke="#fff" stroke-width="2.3" stroke-linecap="round"/></g>
<clipPath id="cpa2"><rect x="702" y="497" width="653" height="16.5"/></clipPath>
<g clip-path="url(#cpa2)"><circle cx="784.7" cy="514.6" r="8.3" fill="#f0673a"/><path d="M781.3 511.2 L788.1 518 M788.1 511.2 L781.3 518" stroke="#fff" stroke-width="2.3" stroke-linecap="round"/>
<circle cx="1324.7" cy="514.6" r="8.3" fill="#f0673a"/><path d="M1321.3 511.2 L1328.1 518 M1328.1 511.2 L1321.3 518" stroke="#fff" stroke-width="2.3" stroke-linecap="round"/></g>
<!-- scroll chevrons -->
<path d="M1361 235 L1364.8 231.2 L1368.6 235" stroke="#9a9a9a" stroke-width="1.1"/>
<path d="M1361 503.4 L1364.8 507.2 L1368.6 503.4" stroke="#9a9a9a" stroke-width="1.1"/>
<!-- inner scroll arrows -->
<path d="M1343.5 310.6 L1348 304.6 L1352.5 310.6 Z" fill="#7d7d7d"/>
<path d="M1343.5 471.4 L1348 477.4 L1352.5 471.4 Z" fill="#7d7d7d"/>
<path d="M743 486 L736 490.5 L743 495 Z" fill="#8d8d8d"/>
<path d="M1329.5 486 L1336.5 490.5 L1329.5 495 Z" fill="#8d8d8d"/>
<!-- expander chevron -->
<path d="M712.6 378 L718.2 382.9 L712.6 387.8" stroke="#2a2a2a" stroke-width="1.3"/>
<!-- bottom button arrows -->
<path d="M698.5 675 L702 678.6 M698.5 677.6 V675 H701.2 M711.2 675 L707.6 678.6 M711.2 677.6 V675 H708.4" stroke="#666" stroke-width="0.9"/>
</svg>
<!--RIGHT-END-->

<!--FRAME-->
<div class="abs" style="left:0;top:718px;width:1391px;height:2px;background:#0e1620"></div>
<div class="abs" style="left:0;top:0;width:1391px;height:719px;border:1px solid #25272d;border-top-color:#3a3c42;border-radius:8px;box-shadow:0 0 0 12px #0e1620;pointer-events:none"></div>

<!--TEXTS-->
<div class="t" style="left:192.0px;top:27px;font-size:15.5px;letter-spacing:-0.33px;color:#ffffff;">CONNECTION</div>
<div class="t" style="left:603.5px;top:8px;font-size:13px;letter-spacing:0.62px;color:#ffffff;">untitled</div>
<div class="t" style="left:419.6px;top:37px;font-size:16.5px;letter-spacing:-1.24px;color:#ffffff;transform:scaleX(0.912);transform-origin:0 0;">PROJECT</div>
<div class="t" style="left:522.3px;top:37px;font-size:16.5px;letter-spacing:-1.24px;color:#ffffff;transform:scaleX(0.984);transform-origin:0 0;">DESIGN</div>
<div class="t" style="left:618.2px;top:37px;font-size:16.5px;letter-spacing:-1.24px;color:#f37021;transform:scaleX(0.939);transform-origin:0 0;">CHECK</div>
<div class="t" style="left:707.5px;top:37px;font-size:16.5px;letter-spacing:-1.24px;color:#ffffff;transform:scaleX(0.899);transform-origin:0 0;">REPORT</div>
<div class="t" style="left:803.4px;top:37px;font-size:16.5px;letter-spacing:-1.24px;color:#ffffff;transform:scaleX(0.972);transform-origin:0 0;">MATERIALS</div>
<div class="t" style="left:98.5px;top:22px;font-size:23px;letter-spacing:-0.68px;color:#ffffff;font-weight:700;font-style:italic;">StatiCa</div>
<div class="t" style="left:178.6px;top:25px;font-size:4.5px;color:#bbbbbb;font-weight:700;">R</div>
<div class="t" style="left:1172.2px;top:40px;font-size:13px;letter-spacing:-0.75px;word-spacing:1.39px;color:#9a9a9a;">Search on ideastatica.com</div>
<div class="t" style="left:7.6px;top:698px;font-size:12.5px;letter-spacing:-0.54px;word-spacing:0.87px;color:#ffffff;">Design code: AISC 360-22 (LRFD) / ACI 318-25</div>
<div class="t" style="left:273.3px;top:698px;font-size:12.5px;letter-spacing:-0.69px;word-spacing:1.27px;color:#ffffff;">Analysis: Stress, strain</div>
<div class="t" style="left:402.1px;top:698px;font-size:12.5px;letter-spacing:-0.16px;color:#ffffff;">Load effects: In equilibrium</div>
<div class="t" style="left:563.2px;top:698px;font-size:12.5px;letter-spacing:-0.54px;word-spacing:0.94px;color:#ffffff;">Units: in</div>
<div class="t" style="left:10.8px;top:77px;font-size:13px;letter-spacing:-0.97px;color:#ffffff;transform:scaleX(0.922);transform-origin:0 0;">CON1</div>
<div class="t" style="left:80.7px;top:107px;font-size:12.5px;letter-spacing:-0.94px;transform:scaleX(0.957);transform-origin:0 0;">New</div>
<div class="t" style="left:117.6px;top:107px;font-size:12.5px;letter-spacing:-0.94px;transform:scaleX(0.996);transform-origin:0 0;">Copy</div>
<div class="t" style="left:159.3px;top:107px;font-size:12.5px;letter-spacing:-0.51px;">Undo</div>
<div class="t" style="left:197.9px;top:107px;font-size:12.5px;letter-spacing:-0.94px;color:#c8c8c8;transform:scaleX(0.969);transform-origin:0 0;">Redo</div>
<div class="t" style="left:238.0px;top:107px;font-size:12.5px;letter-spacing:-0.94px;transform:scaleX(0.971);transform-origin:0 0;">Share</div>
<div class="t" style="left:234.8px;top:122px;font-size:12.5px;letter-spacing:-0.34px;">project</div>
<div class="t" style="left:281.2px;top:107px;font-size:12.5px;letter-spacing:-0.94px;transform:scaleX(0.921);transform-origin:0 0;">Save</div>
<div class="t" style="left:321.5px;top:107px;font-size:12.5px;letter-spacing:-0.34px;">Project</div>
<div class="t" style="left:320.7px;top:122px;font-size:12.5px;letter-spacing:-0.40px;">settings</div>
<div class="t" style="left:371.8px;top:105px;font-size:12.5px;letter-spacing:-0.39px;">Members</div>
<div class="t" style="left:426.8px;top:105px;font-size:12.5px;letter-spacing:-0.76px;">Plates</div>
<div class="t" style="left:467.7px;top:105px;font-size:12.5px;letter-spacing:-0.94px;transform:scaleX(0.924);transform-origin:0 0;">LCS</div>
<div class="t" style="left:507.7px;top:107px;font-size:12.5px;letter-spacing:-0.94px;transform:scaleX(0.983);transform-origin:0 0;">New</div>
<div class="t" style="left:541.5px;top:107px;font-size:12.5px;letter-spacing:-0.86px;">Gallery</div>
<div class="t" style="left:588.8px;top:104px;font-size:12.5px;letter-spacing:-0.53px;">Calculate</div>
<div class="t" style="left:642.5px;top:105px;font-size:12.5px;letter-spacing:-0.49px;">Overall</div>
<div class="t" style="left:645.9px;top:120px;font-size:12.5px;letter-spacing:-0.85px;">check</div>
<div class="t" style="left:684.6px;top:105px;font-size:12.5px;letter-spacing:-0.78px;">Strain</div>
<div class="t" style="left:684.6px;top:120px;font-size:12.5px;letter-spacing:-0.75px;">check</div>
<div class="t" style="left:718.7px;top:105px;font-size:12.5px;letter-spacing:-0.21px;color:#c8c8c8;">Buckling</div>
<div class="t" style="left:727.6px;top:120px;font-size:12.5px;letter-spacing:-0.94px;color:#c8c8c8;transform:scaleX(0.995);transform-origin:0 0;">shape</div>
<div class="t" style="left:769.7px;top:105px;font-size:12.5px;letter-spacing:-0.55px;">Concrete</div>
<div class="t" style="left:778.7px;top:120px;font-size:12.5px;letter-spacing:-0.85px;">check</div>
<div class="t" style="left:829.3px;top:105px;font-size:12.5px;letter-spacing:-0.94px;transform:scaleX(0.876);transform-origin:0 0;">RC</div>
<div class="t" style="left:822.9px;top:120px;font-size:12.5px;letter-spacing:-0.80px;">check</div>
<div class="t" style="left:861.4px;top:105px;font-size:12.5px;letter-spacing:-0.42px;">Equivalent</div>
<div class="t" style="left:875.4px;top:120px;font-size:12.5px;letter-spacing:-0.94px;transform:scaleX(0.986);transform-origin:0 0;">stress</div>
<div class="t" style="left:920.7px;top:105px;font-size:12.5px;letter-spacing:-0.48px;">Plastic</div>
<div class="t" style="left:924.5px;top:120px;font-size:12.5px;letter-spacing:-0.62px;">strain</div>
<div class="t" style="left:960.8px;top:105px;font-size:12.5px;letter-spacing:-0.94px;word-spacing:1.38px;transform:scaleX(0.975);transform-origin:0 0;">Stress in</div>
<div class="t" style="left:959.6px;top:120px;font-size:12.5px;letter-spacing:-0.34px;">contacts</div>
<div class="t" style="left:1010.7px;top:105px;font-size:12.5px;letter-spacing:-0.94px;word-spacing:1.38px;transform:scaleX(0.975);transform-origin:0 0;">Stress in</div>
<div class="t" style="left:1009.0px;top:120px;font-size:12.5px;letter-spacing:-0.43px;">concrete</div>
<div class="t" style="left:1063.7px;top:105px;font-size:12.5px;letter-spacing:-0.36px;">Bolt</div>
<div class="t" style="left:1058.1px;top:120px;font-size:12.5px;letter-spacing:-0.44px;">forces</div>
<div class="t" style="left:1095.8px;top:105px;font-size:12.5px;letter-spacing:-0.80px;">Mesh</div>
<div class="t" style="left:1129.5px;top:105px;font-size:12.5px;letter-spacing:-0.32px;color:#c8c8c8;">Deformed</div>
<div class="t" style="left:1218.6px;top:71px;font-size:13px;letter-spacing:-0.83px;">10.00</div>
<div class="t" style="left:41.3px;top:147px;font-size:12.5px;letter-spacing:-0.22px;">Project items</div>
<div class="t" style="left:220.4px;top:147px;font-size:12.5px;letter-spacing:-0.94px;">Data</div>
<div class="t" style="left:322.0px;top:147px;font-size:12.5px;letter-spacing:-0.59px;">Options</div>
<div class="t" style="left:415.7px;top:147px;font-size:12.5px;letter-spacing:-0.86px;">Labels</div>
<div class="t" style="left:519.0px;top:147px;font-size:12.5px;letter-spacing:-0.56px;">Pictures</div>
<div class="t" style="left:700.7px;top:147px;font-size:12.5px;letter-spacing:-0.94px;transform:scaleX(0.957);transform-origin:0 0;">CBFEM</div>
<div class="t" style="left:1035.0px;top:147px;font-size:12.5px;letter-spacing:-0.87px;word-spacing:1.38px;">FE analysis</div>
<div class="t" style="left:708.3px;top:172px;font-size:13px;letter-spacing:-0.89px;color:#fff4ea;">Analysis</div>
<div class="t" style="left:775.9px;top:172px;font-size:13px;letter-spacing:-0.91px;color:#fff4ea;">Plates</div>
<div class="t" style="left:833.4px;top:172px;font-size:13px;letter-spacing:-0.78px;color:#fff4ea;">Bolts</div>
<div class="t" style="left:886.1px;top:172px;font-size:13px;letter-spacing:-0.78px;color:#f37021;">Anchors</div>
<div class="t" style="left:956.3px;top:172px;font-size:13px;letter-spacing:-0.97px;color:#fff4ea;transform:scaleX(0.970);transform-origin:0 0;">Welds</div>
<div class="t" style="left:1014.5px;top:172px;font-size:13px;letter-spacing:-0.70px;word-spacing:1.32px;color:#fff4ea;">Concrete block</div>
<div class="t" style="left:706.5px;top:205px;font-size:13px;letter-spacing:-0.06px;color:#e96f2b;font-weight:700;">Check of anchors for extreme load effect</div>
<div class="t" style="left:765.3px;top:241px;font-size:12.5px;letter-spacing:-0.67px;color:#3a3a3a;font-weight:700;">Status</div>
<div class="t" style="left:812.6px;top:241px;font-size:12.5px;letter-spacing:0.10px;color:#3a3a3a;font-weight:700;">Item</div>
<div class="t" style="left:851.5px;top:241px;font-size:12.5px;letter-spacing:-0.77px;color:#3a3a3a;font-weight:700;">Grade</div>
<div class="t" style="left:955.5px;top:241px;font-size:12.5px;letter-spacing:-0.94px;color:#3a3a3a;font-weight:700;transform:scaleX(0.921);transform-origin:0 0;">Loads</div>
<div class="t" style="left:998.2px;top:234px;font-size:12.5px;letter-spacing:-0.53px;color:#3a3a3a;font-weight:700;">Nf</div>
<div class="t" style="left:998.2px;top:251px;font-size:10.5px;letter-spacing:0.54px;color:#444444;">[kip]</div>
<div class="t" style="left:1048.6px;top:234px;font-size:12.5px;letter-spacing:-0.94px;color:#3a3a3a;font-weight:700;transform:scaleX(0.930);transform-origin:0 0;">V</div>
<div class="t" style="left:1048.6px;top:251px;font-size:10.5px;letter-spacing:0.34px;color:#444444;">[kip]</div>
<div class="t" style="left:1098.3px;top:234px;font-size:12.5px;letter-spacing:-0.94px;color:#3a3a3a;font-weight:700;transform:scaleX(0.971);transform-origin:0 0;">ϕNp</div>
<div class="t" style="left:1098.3px;top:251px;font-size:10.5px;letter-spacing:0.47px;color:#444444;">[kip]</div>
<div class="t" style="left:1148.8px;top:234px;font-size:12.5px;letter-spacing:-0.83px;color:#3a3a3a;font-weight:700;">Ut</div>
<div class="t" style="left:1163.0px;top:239px;font-size:9.5px;color:#3a3a3a;font-weight:700;">t</div>
<div class="t" style="left:1148.8px;top:251px;font-size:10.5px;letter-spacing:-0.28px;color:#444444;">[%]</div>
<div class="t" style="left:1198.7px;top:234px;font-size:12.5px;letter-spacing:-0.83px;color:#3a3a3a;font-weight:700;">Ut</div>
<div class="t" style="left:1212.6px;top:239px;font-size:9.5px;color:#3a3a3a;font-weight:700;">s</div>
<div class="t" style="left:1198.7px;top:251px;font-size:10.5px;letter-spacing:-0.28px;color:#444444;">[%]</div>
<div class="t" style="left:1248.7px;top:234px;font-size:12.5px;letter-spacing:-0.83px;color:#3a3a3a;font-weight:700;">Ut</div>
<div class="t" style="left:1262.6px;top:239px;font-size:9.5px;color:#3a3a3a;font-weight:700;">ts</div>
<div class="t" style="left:1248.7px;top:251px;font-size:10.5px;letter-spacing:-0.28px;color:#444444;">[%]</div>
<div class="t" style="left:1298.9px;top:241px;font-size:12.5px;letter-spacing:-0.44px;color:#3a3a3a;font-weight:700;">Detailing</div>
<div class="t" style="left:812.6px;top:279px;font-size:12.5px;letter-spacing:-0.94px;transform:scaleX(0.882);transform-origin:0 0;">A1</div>
<div class="t" style="left:851.5px;top:279px;font-size:12.5px;letter-spacing:-0.94px;word-spacing:1.38px;transform:scaleX(0.973);transform-origin:0 0;">Φ0.75 Grade 60 - 2</div>
<div class="t" style="left:954.7px;top:279px;font-size:12.5px;letter-spacing:-0.94px;transform:scaleX(0.840);transform-origin:0 0;">LE1</div>
<div class="t" style="left:998.2px;top:279px;font-size:12.5px;letter-spacing:-0.94px;transform:scaleX(0.960);transform-origin:0 0;">0.00</div>
<div class="t" style="left:1048.1px;top:279px;font-size:12.5px;letter-spacing:-0.94px;transform:scaleX(0.969);transform-origin:0 0;">0.54</div>
<div class="t" style="left:1098.3px;top:279px;font-size:12.5px;letter-spacing:-0.94px;transform:scaleX(0.957);transform-origin:0 0;">10.22</div>
<div class="t" style="left:1148.2px;top:279px;font-size:12.5px;letter-spacing:-0.94px;transform:scaleX(0.952);transform-origin:0 0;">0.0</div>
<div class="t" style="left:1198.7px;top:279px;font-size:12.5px;letter-spacing:-0.94px;transform:scaleX(0.868);transform-origin:0 0;">5.2</div>
<div class="t" style="left:1248.4px;top:279px;font-size:12.5px;letter-spacing:-0.94px;transform:scaleX(0.913);transform-origin:0 0;">0.3</div>
<div class="t" style="left:732.0px;top:312px;font-size:11px;letter-spacing:-0.10px;color:#111111;font-style:italic;">The behaviour of anchor groups is predicated on the assumption that all anchors in the group exhibit roughly the same stiffness.</div>
<div class="t" style="left:732.0px;top:334px;font-size:11px;letter-spacing:-0.11px;color:#111111;font-style:italic;">This is verified if the anchors are of the same type, diameter and embedment.</div>
<div class="t" style="left:732.0px;top:355px;font-size:11px;letter-spacing:-0.12px;color:#111111;font-style:italic;">(CEB-FIB: Bulletin 58: Design of anchorages in concrete (2011) – Chapter 1.2)</div>
<div class="t" style="left:731.2px;top:394px;font-size:11px;letter-spacing:-0.14px;color:#111111;font-weight:700;">Anchor tensile resistance</div>
<div class="t" style="left:865.1px;top:394px;font-size:11px;letter-spacing:-0.06px;color:#111111;">(ACI 318-25 – 20.2.2)</div>
<div class="t" style="left:736.3px;top:414px;font-size:14.5px;letter-spacing:0.60px;color:#333333;font-style:italic;font-family:'Liberation Serif',serif;">ϕN</div>
<div class="t" style="left:755.8px;top:421px;font-size:8.5px;letter-spacing:0.49px;color:#333333;font-style:italic;font-family:'Liberation Serif',serif;">sa</div>
<div class="t" style="left:768.6px;top:414px;font-size:14.5px;color:#333333;font-family:'Liberation Serif',serif;">=</div>
<div class="t" style="left:781.4px;top:414px;font-size:14.5px;letter-spacing:-1.09px;color:#333333;font-style:italic;font-family:'Liberation Serif',serif;transform:scaleX(0.984);transform-origin:0 0;">ϕ</div>
<div class="t" style="left:790.8px;top:414px;font-size:14.5px;color:#333333;font-style:italic;font-family:'Liberation Serif',serif;">·</div>
<div class="t" style="left:799.4px;top:414px;font-size:14.5px;letter-spacing:-1.09px;color:#333333;font-style:italic;font-family:'Liberation Serif',serif;transform:scaleX(0.987);transform-origin:0 0;">A</div>
<div class="t" style="left:807.4px;top:421px;font-size:8.5px;color:#333333;font-style:italic;font-family:'Liberation Serif',serif;">s</div>
<div class="t" style="left:813.6px;top:414px;font-size:14.5px;color:#333333;font-style:italic;font-family:'Liberation Serif',serif;">·</div>
<div class="t" style="left:821.0px;top:414px;font-size:14.5px;letter-spacing:0.60px;color:#333333;font-style:italic;font-family:'Liberation Serif',serif;">f</div>
<div class="t" style="left:828.4px;top:422px;font-size:8.5px;color:#333333;font-style:italic;font-family:'Liberation Serif',serif;">y</div>
<div class="t" style="left:838.6px;top:414px;font-size:14.5px;letter-spacing:1.60px;color:#333333;font-family:'Liberation Serif',serif;">=</div>
<div class="t" style="left:863.8px;top:418px;font-size:11px;letter-spacing:-0.35px;color:#111111;">18.56</div>
<div class="t" style="left:901.1px;top:418px;font-size:11px;letter-spacing:-0.42px;color:#111111;">kip</div>
<div class="t" style="left:925.0px;top:418px;font-size:11px;color:#111111;">≥</div>
<div class="t" style="left:943.6px;top:414px;font-size:14.5px;letter-spacing:-1.00px;color:#333333;font-style:italic;font-family:'Liberation Serif',serif;">N</div>
<div class="t" style="left:953.4px;top:422px;font-size:8.5px;color:#333333;font-style:italic;font-family:'Liberation Serif',serif;">f</div>
<div class="t" style="left:962.4px;top:414px;font-size:14.5px;letter-spacing:1.60px;color:#333333;font-family:'Liberation Serif',serif;">=</div>
<div class="t" style="left:986.6px;top:418px;font-size:11px;letter-spacing:-0.36px;color:#111111;">0.00</div>
<div class="t" style="left:1018.6px;top:418px;font-size:11px;letter-spacing:-0.27px;color:#111111;">kip</div>
<div class="t" style="left:767.0px;top:443px;font-size:11px;letter-spacing:-0.14px;color:#111111;">Where:</div>
<div class="t" style="left:767.0px;top:455px;font-size:14.5px;letter-spacing:-1.09px;color:#333333;font-style:italic;font-family:'Liberation Serif',serif;transform:scaleX(0.984);transform-origin:0 0;">ϕ</div>
<div class="t" style="left:778.2px;top:455px;font-size:14.5px;letter-spacing:1.60px;color:#333333;font-family:'Liberation Serif',serif;">=</div>
<div class="t" style="left:792.1px;top:459px;font-size:11px;letter-spacing:-0.30px;color:#111111;">0.70</div>
<div class="t" style="left:846.5px;top:459px;font-size:11px;letter-spacing:-0.10px;color:#111111;">– resistance factor</div>
<div class="t" style="left:706.6px;top:520px;font-size:13.5px;letter-spacing:-0.56px;word-spacing:1.01px;color:#e96f2b;font-weight:700;">Design data</div>
<div class="t" style="left:735.5px;top:562px;font-size:12.5px;letter-spacing:-0.67px;color:#3a3a3a;font-weight:700;">Grade</div>
<div class="t" style="left:839.4px;top:555px;font-size:12.5px;letter-spacing:-0.94px;color:#3a3a3a;font-weight:700;transform:scaleX(0.907);transform-origin:0 0;">ϕNsa</div>
<div class="t" style="left:839.5px;top:572px;font-size:10.5px;letter-spacing:0.42px;color:#444444;">[kip]</div>
<div class="t" style="left:889.3px;top:555px;font-size:12.5px;letter-spacing:-0.94px;color:#3a3a3a;font-weight:700;transform:scaleX(0.885);transform-origin:0 0;">ϕVsa</div>
<div class="t" style="left:889.4px;top:572px;font-size:10.5px;letter-spacing:0.42px;color:#444444;">[kip]</div>
<div class="t" style="left:735.2px;top:600px;font-size:12.5px;letter-spacing:-0.94px;word-spacing:1.38px;transform:scaleX(0.980);transform-origin:0 0;">Φ0.75 Grade 60 - 2</div>
<div class="t" style="left:839.5px;top:600px;font-size:12.5px;letter-spacing:-0.94px;transform:scaleX(0.961);transform-origin:0 0;">18.56</div>
<div class="t" style="left:889.6px;top:600px;font-size:12.5px;letter-spacing:-0.94px;transform:scaleX(0.965);transform-origin:0 0;">10.34</div>
<div class="t" style="left:735.2px;top:630px;font-size:12.5px;letter-spacing:-0.94px;word-spacing:1.38px;transform:scaleX(0.990);transform-origin:0 0;">Φ0.75 Type A - 3</div>
<div class="t" style="left:839.5px;top:630px;font-size:12.5px;letter-spacing:-0.94px;transform:scaleX(0.961);transform-origin:0 0;">18.84</div>
<div class="t" style="left:889.6px;top:630px;font-size:12.5px;letter-spacing:-0.94px;transform:scaleX(0.965);transform-origin:0 0;">17.49</div>
<div class="t" style="left:11.1px;top:211px;font-size:12.5px;letter-spacing:-0.66px;">Analysis</div>
<div class="t" style="left:10.1px;top:232px;font-size:12.5px;letter-spacing:-0.58px;">Plates</div>
<div class="t" style="left:10.1px;top:253px;font-size:12.5px;letter-spacing:-0.38px;">Bolts</div>
<div class="t" style="left:11.1px;top:274px;font-size:12.5px;letter-spacing:-0.52px;">Anchors</div>
<div class="t" style="left:11.1px;top:295px;font-size:12.5px;letter-spacing:-0.71px;">Welds</div>
<div class="t" style="left:11.1px;top:316px;font-size:12.5px;letter-spacing:-0.44px;word-spacing:0.83px;">Concrete block</div>
<div class="t" style="left:10.1px;top:337px;font-size:12.5px;letter-spacing:-0.34px;">Buckling</div>
<div class="t" style="left:126.9px;top:211px;font-size:12.5px;letter-spacing:-0.94px;transform:scaleX(0.984);transform-origin:0 0;">100.0%</div>
<div class="t" style="left:126.9px;top:232px;font-size:12.5px;letter-spacing:-0.91px;word-spacing:1.34px;">0.0 &lt; 5.0%</div>
<div class="t" style="left:130.0px;top:253px;font-size:12.5px;letter-spacing:-0.78px;word-spacing:1.19px;">29.8 &lt; 100%</div>
<div class="t" style="left:130.0px;top:274px;font-size:12.5px;letter-spacing:-0.78px;word-spacing:1.19px;">38.2 &lt; 100%</div>
<div class="t" style="left:130.0px;top:295px;font-size:12.5px;letter-spacing:-0.78px;word-spacing:1.19px;">27.7 &lt; 100%</div>
<div class="t" style="left:133.9px;top:316px;font-size:12.5px;letter-spacing:-0.94px;word-spacing:1.38px;">1.4 &lt; 100%</div>
<div class="t" style="left:125.9px;top:337px;font-size:12.5px;letter-spacing:-0.23px;">Not calculated</div>
<div class="t" style="left:412.2px;top:210px;font-size:13px;letter-spacing:-0.85px;word-spacing:1.43px;color:#ee7b36;font-weight:700;">Production cost</div>
<div class="t" style="left:507.6px;top:210px;font-size:13px;color:#111111;font-weight:700;">-</div>
<div class="t" style="left:515.9px;top:211px;font-size:12.5px;letter-spacing:-0.94px;word-spacing:1.38px;color:#111111;font-weight:700;transform:scaleX(0.973);transform-origin:0 0;">62 US$</div>
<div class="t" style="left:546.7px;top:299px;font-size:13px;letter-spacing:-0.92px;word-spacing:1.43px;color:#ffffff;font-weight:700;">Load effects</div>
<div class="t" style="left:567.1px;top:321px;font-size:13px;letter-spacing:-0.97px;word-spacing:1.43px;color:#333333;font-weight:700;transform:scaleX(0.993);transform-origin:0 0;">Stress, strain</div>
<div class="t" style="left:566.9px;top:345px;font-size:12.5px;letter-spacing:-0.94px;color:#444444;transform:scaleX(0.855);transform-origin:0 0;">LE1</div>
<div class="t" style="left:812.6px;top:508px;font-size:12.5px;letter-spacing:-0.94px;transform:scaleX(0.882);transform-origin:0 0;clip-path:inset(0 0 7.1px 0);">A2</div>
<div class="t" style="left:851.5px;top:508px;font-size:12.5px;letter-spacing:-0.94px;word-spacing:1.38px;transform:scaleX(0.973);transform-origin:0 0;clip-path:inset(0 0 7.1px 0);">Φ0.75 Grade 60 - 2</div>
<div class="t" style="left:954.7px;top:508px;font-size:12.5px;letter-spacing:-0.94px;transform:scaleX(0.840);transform-origin:0 0;clip-path:inset(0 0 7.1px 0);">LE1</div>
<div class="t" style="left:998.2px;top:508px;font-size:12.5px;letter-spacing:-0.94px;transform:scaleX(0.960);transform-origin:0 0;clip-path:inset(0 0 7.1px 0);">0.24</div>
<div class="t" style="left:1048.1px;top:508px;font-size:12.5px;letter-spacing:-0.94px;transform:scaleX(0.969);transform-origin:0 0;clip-path:inset(0 0 7.1px 0);">0.58</div>
<div class="t" style="left:1098.3px;top:508px;font-size:12.5px;letter-spacing:-0.94px;transform:scaleX(0.957);transform-origin:0 0;clip-path:inset(0 0 7.1px 0);">14.60</div>
<div class="t" style="left:1148.2px;top:508px;font-size:12.5px;letter-spacing:-0.94px;transform:scaleX(0.952);transform-origin:0 0;clip-path:inset(0 0 7.1px 0);">1.7</div>
<div class="t" style="left:1198.7px;top:508px;font-size:12.5px;letter-spacing:-0.94px;transform:scaleX(0.868);transform-origin:0 0;clip-path:inset(0 0 7.1px 0);">5.6</div>
<div class="t" style="left:1248.4px;top:508px;font-size:12.5px;letter-spacing:-0.94px;transform:scaleX(0.913);transform-origin:0 0;clip-path:inset(0 0 7.1px 0);">0.2</div>
<div class="t" style="left:771.6px;top:478px;font-size:14.5px;font-style:italic;font-family:'Liberation Serif',serif;clip-path:inset(0 0 7.9px 0);">A</div>
<div class="t" style="left:783.5px;top:478px;font-size:14.5px;letter-spacing:1.50px;font-family:'Liberation Serif',serif;clip-path:inset(0 0 7.9px 0);">=</div>
<div class="t" style="left:806.0px;top:482px;font-size:11px;letter-spacing:-0.82px;word-spacing:1.21px;transform:scaleX(0.617);transform-origin:0 0;clip-path:inset(0 0 8.4px 0);">0.44 in</div>
<div class="t" style="left:830.6px;top:481px;font-size:8px;clip-path:inset(0 0 4.4px 0);">2</div>
<div class="t" style="left:846.5px;top:482px;font-size:11px;letter-spacing:-0.39px;word-spacing:0.64px;clip-path:inset(0 0 8.4px 0);">– tensile stress area</div>
</body>
</html>
